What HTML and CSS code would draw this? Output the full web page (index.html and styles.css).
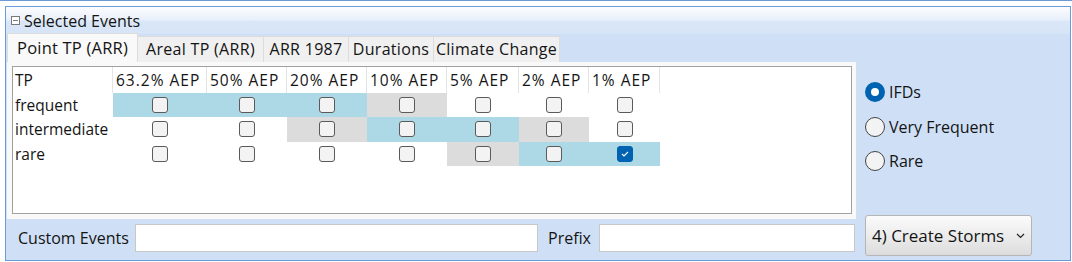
FILE: index.html
```html
<!DOCTYPE html>
<html lang="en">

<head>
    <meta charset="UTF-8">
    <title>Selected Events</title>
    <link rel="stylesheet" href="styles.css">
</head>

<body>
    <div class="topline"></div>
    <div class="panel">
        <div class="panel-head">
            <span class="collapse-icon"></span>
            <span class="panel-title">Selected Events</span>
        </div>
        <div class="panel-body">
            <div class="left">
                <div class="tabs">
                    <div class="tab active">Point TP (ARR)</div>
                    <div class="tab tab-wide">Areal TP (ARR)</div>
                    <div class="tab tab-narrow">ARR 1987</div>
                    <div class="tab tab-narrow">Durations</div>
                    <div class="tab tab-wide">Climate Change</div>
                </div>
                <div class="tab-page">
                    <div class="grid-box">
                        <div class="grid">
                            <div class="hcell">TP</div>
                            <div class="hcell">63.2% AEP</div>
                            <div class="hcell">50% AEP</div>
                            <div class="hcell">20% AEP</div>
                            <div class="hcell">10% AEP</div>
                            <div class="hcell">5% AEP</div>
                            <div class="hcell">2% AEP</div>
                            <div class="hcell">1% AEP</div>

                            <div class="rlabel">frequent</div>
                            <div class="cell blue"><span class="check"></span></div>
                            <div class="cell blue"><span class="check"></span></div>
                            <div class="cell blue"><span class="check"></span></div>
                            <div class="cell grey"><span class="check"></span></div>
                            <div class="cell"><span class="check"></span></div>
                            <div class="cell"><span class="check"></span></div>
                            <div class="cell"><span class="check"></span></div>

                            <div class="rlabel">intermediate</div>
                            <div class="cell"><span class="check"></span></div>
                            <div class="cell"><span class="check"></span></div>
                            <div class="cell grey"><span class="check"></span></div>
                            <div class="cell blue"><span class="check"></span></div>
                            <div class="cell blue"><span class="check"></span></div>
                            <div class="cell grey"><span class="check"></span></div>
                            <div class="cell"><span class="check"></span></div>

                            <div class="rlabel">rare</div>
                            <div class="cell"><span class="check"></span></div>
                            <div class="cell"><span class="check"></span></div>
                            <div class="cell"><span class="check"></span></div>
                            <div class="cell"><span class="check"></span></div>
                            <div class="cell grey"><span class="check"></span></div>
                            <div class="cell blue"><span class="check"></span></div>
                            <div class="cell blue">
                                <span class="check checked">
                                    <svg width="8" height="6" viewBox="0 0 8 6"><polyline points="1,3 3,5 7,1" fill="none" stroke="#fff" stroke-width="1.1"/></svg>
                                </span>
                            </div>
                        </div>
                    </div>
                </div>
                <div class="bottom-row">
                    <label class="field-label">Custom Events</label>
                    <input class="text-input custom" type="text">
                    <label class="field-label prefix">Prefix</label>
                    <input class="text-input prefix-input" type="text">
                </div>
            </div>
            <div class="right">
                <div class="radios">
                    <div class="radio-row"><span class="radio selected"></span>IFDs</div>
                    <div class="radio-row"><span class="radio"></span>Very Frequent</div>
                    <div class="radio-row"><span class="radio"></span>Rare</div>
                </div>
                <button class="storm-btn" type="button">
                    <span>4) Create Storms</span>
                    <svg width="9" height="6" viewBox="0 0 9 6"><polyline points="1,1 4.5,4.5 8,1" fill="none" stroke="#222" stroke-width="1.2"/></svg>
                </button>
            </div>
        </div>
    </div>
</body>

</html>
```

FILE: styles.css
```css
body {
    margin: 0;
    background-color: #fff;
    font-family: "Open Sans", sans-serif;
    font-size: 16px;
    color: #141414;
    overflow: hidden;
}

.topline {
    height: 1px;
    background-color: #6a9bd9;
}

.panel {
    margin: 5px 1px 0 5px;
    height: 253px;
    border: 1px solid #6a9bd9;
    background-color: #cfe0f6;
}

.panel-head {
    height: 27px;
    display: flex;
    align-items: center;
    gap: 4px;
    padding-left: 5px;
    background: linear-gradient(to bottom, #fbfcfe 0, #e9f0fa 48%, #dae7f8 52%, #d6e4f7 100%);
}

.collapse-icon {
    width: 7px;
    height: 7px;
    border: 1px solid #7a7a7a;
    background: linear-gradient(#7a7a7a, #7a7a7a) center / 5px 1px no-repeat, #fff;
}

.panel-title {
    font-size: 16px;
}

.panel-body {
    display: flex;
    padding-left: 1px;
}

.left {
    width: 849px;
}

.tabs {
    display: flex;
    align-items: flex-end;
    height: 28px;
}

.tab {
    height: 26px;
    line-height: 25px;
    padding: 0;
    box-sizing: border-box;
    text-align: center;
    white-space: nowrap;
    background-color: #f0f0f0;
    border: 1px solid #dcdcdc;
    border-bottom: none;
    margin-right: -1px;
    font-size: 16px;
    letter-spacing: 0.3px;
}

.tab-wide {
    width: 127px;
}

.tab-narrow {
    width: 86px;
}

.tab.active {
    width: 131px;
    height: 29px;
    line-height: 28px;
    font-size: 16.5px;
    letter-spacing: 0.2px;
    background-color: #f9f9f9;
}

.tab-page {
    background-color: #f9f9f9;
    padding: 4px 4px 5px 5px;
}

.grid-box {
    height: 146px;
    border: 1px solid #a0a0a0;
    background-color: #fff;
}

.grid {
    display: grid;
    grid-template-columns: 100px 94px 80px 80px 80px 72px 70px 71px;
    grid-template-rows: 26px repeat(3, 24.33px);
}

.hcell {
    padding-left: 3px;
    line-height: 26px;
    border-right: 1px solid #e4e4e4;
    white-space: nowrap;
    font-size: 15.5px;
    letter-spacing: 1px;
}

.hcell:first-child {
    padding-left: 2px;
    letter-spacing: 0;
}

.rlabel {
    padding-left: 2px;
    line-height: 24px;
    font-size: 15.5px;
}

.cell {
    display: flex;
    justify-content: center;
    align-items: center;
}

.cell.blue {
    background-color: #add8e6;
}

.cell.grey {
    background-color: #dcdcdc;
}

.check {
    width: 14px;
    height: 14px;
    border: 1px solid #5a5a5a;
    border-radius: 3px;
    background-color: #f3f3f3;
    display: flex;
    justify-content: center;
    align-items: center;
}

.check.checked {
    border-color: #0063b1;
    background-color: #0063b1;
}

.bottom-row {
    display: flex;
    align-items: center;
    height: 38px;
}

.field-label {
    font-size: 16px;
    padding-left: 11px;
    width: 117px;
}

.field-label.prefix {
    padding-left: 10px;
    width: 51px;
}

.text-input {
    height: 28px;
    box-sizing: border-box;
    border: 1px solid #c8c8c8;
    background-color: #fff;
    margin: 0;
}

.custom {
    width: 403px;
}

.prefix-input {
    width: 256px;
}

.right {
    margin-left: 9px;
    display: flex;
    flex-direction: column;
}

.radios {
    padding-top: 48px;
    height: 133px;
    display: flex;
    flex-direction: column;
    gap: 14.5px;
}

.radio-row {
    display: flex;
    align-items: center;
    gap: 4px;
    font-size: 16px;
    height: 20px;
}

.radio {
    width: 18px;
    height: 18px;
    border: 1px solid #444;
    border-radius: 50%;
    background-color: #f3f3f3;
}

.radio.selected {
    width: 8px;
    height: 8px;
    border: 6px solid #0063b1;
    background-color: #fff;
}

.storm-btn {
    width: 167px;
    height: 41px;
    display: flex;
    align-items: center;
    justify-content: space-between;
    padding: 0 6px 0 6px;
    font-family: "Open Sans", sans-serif;
    font-size: 17px;
    color: #141414;
    border: 1px solid #b5b5b5;
    border-radius: 3px;
    background: linear-gradient(to bottom, #fbfbfb, #e9e9e9 60%, #dcdcdc);
}
```
